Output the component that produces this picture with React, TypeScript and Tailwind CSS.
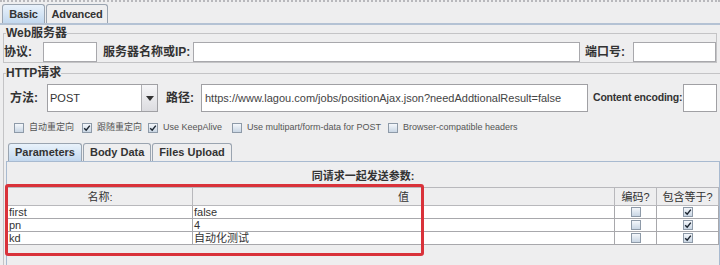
import { useState } from "react";

const FONT = "font-['Liberation_Sans','Noto_Sans_CJK_SC',sans-serif]";

function Check({ checked }: { checked?: boolean }) {
  return (
    <span className="flex h-[10px] w-[10px] shrink-0 items-center justify-center border border-[#8e9aa8] bg-gradient-to-b from-[#f4f7fb] to-[#c9d6e4]">
      {checked && (
        <svg viewBox="0 0 10 10" className="h-[8px] w-[8px]">
          <path d="M1.5 5.2 L4 7.8 L8.5 2" fill="none" stroke="#1c2530" strokeWidth="1.8" />
        </svg>
      )}
    </span>
  );
}

function Tab({ label, active, w }: { label: string; active?: boolean; w?: string }) {
  return (
    <div
      className={
        "flex h-full items-center justify-center whitespace-nowrap rounded-t-[3px] border border-b-0 border-[#9aa4b0] px-[6px] font-bold text-[#333] " +
        (w ?? "") +
        " " +
        (active ? "bg-gradient-to-b from-[#e9f2fb] to-[#c3d8ee]" : "bg-[#eeeeef]")
      }
    >
      {label}
    </div>
  );
}

const rows = [
  { name: "first", value: "false" },
  { name: "pn", value: "4" },
  { name: "kd", value: "自动化测试" },
];

const opts = [
  { label: "自动重定向", on: false, w: "w-[68px]" },
  { label: "跟随重定向", on: true, w: "w-[66px]" },
  { label: "Use KeepAlive", on: true, w: "w-[84px]" },
  { label: "Use multipart/form-data for POST", on: false, w: "w-[156px]" },
  { label: "Browser-compatible headers", on: false, w: "w-[150px]" },
];

export default function App() {
  const [tab, setTab] = useState("Parameters");

  return (
    <div className={"h-[265px] w-[720px] overflow-hidden border-t-2 border-dotted border-[#b8b8bc] bg-[#eeeeef] text-[11px] text-[#222] " + FONT}>
      <div className="flex h-[23px] items-end gap-px border-b-2 border-[#b4c2d4] pl-[2px] pt-[2px] text-[11px] tracking-[-0.2px]">
        <Tab label="Basic" active w="w-[43px]" />
        <Tab label="Advanced" w="w-[62px]" />
      </div>

      <fieldset className="mx-[3px] mt-[2px] border border-[#c4c4c6]">
        <legend className="ml-[2px] text-[12px] font-bold leading-[12px] text-[#333]">Web服务器</legend>
        <div className="mt-[3px] flex h-[20px] items-center text-[12px] font-bold text-[#333]">
          <span className="w-[39px]">协议:</span>
          <div className="h-[20px] w-[54px] border border-[#a8a8ac] bg-white" />
          <span className="ml-[6px] w-[90px] whitespace-nowrap">服务器名称或IP:</span>
          <div className="h-[20px] w-[387px] border border-[#a8a8ac] bg-white" />
          <span className="ml-[5px] w-[48px]">端口号:</span>
          <div className="h-[20px] w-[83px] border border-[#a8a8ac] bg-white" />
        </div>
      </fieldset>

      <fieldset className="mx-[3px] mr-0 mt-[4px] border border-b-0 border-r-0 border-[#c4c4c6]">
        <legend className="ml-[2px] text-[12px] font-bold leading-[12px] text-[#333]">HTTP请求</legend>
        <div className="mt-[5px] flex h-[28px] items-center text-[12px] font-bold text-[#333]">
          <span className="ml-[6px] w-[37px]">方法:</span>
          <div className="flex h-[28px] w-[111px] border border-[#a0a0a4] bg-white">
            <span className="flex flex-1 items-center pl-[2px] text-[11px] font-normal">POST</span>
            <span className="flex w-[16px] items-center justify-center border-l border-[#b0b0b4] bg-gradient-to-b from-[#f6f6f8] to-[#dcdce0]">
              <svg viewBox="0 0 8 5" className="h-[5px] w-[8px]">
                <path d="M0 0 H8 L4 5 Z" fill="#333" />
              </svg>
            </span>
          </div>
          <span className="ml-[8px] w-[35px]">路径:</span>
          <div className="flex h-[28px] w-[387px] items-center border border-[#a0a0a4] bg-white pl-[3px] text-[11px] font-normal text-[#444]">
            https://www.lagou.com/jobs/positionAjax.json?needAddtionalResult=false
          </div>
          <span className="ml-[5px] w-[90px] shrink-0 whitespace-nowrap text-[10.5px] tracking-[-0.2px]">Content encoding:</span>
          <div className="h-[28px] w-[34px] shrink-0 border border-[#a0a0a4] bg-white" />
        </div>

        <div className="mt-[11px] flex h-[10px] items-center pl-[10px] text-[9px] text-[#555]">
          {opts.map((o) => (
            <label key={o.label} className={"flex items-center gap-[5px] whitespace-nowrap " + o.w}>
              <Check checked={o.on} />
              <span>{o.label}</span>
            </label>
          ))}
        </div>

        <div className="ml-[2px] mt-[10px]">
          <div className="flex h-[18px] items-end gap-px pl-[2px] text-[11px]">
            {["Parameters", "Body Data", "Files Upload"].map((t) => (
              <button key={t} className="h-full" onClick={() => setTab(t)}>
                <Tab label={t} active={tab === t} />
              </button>
            ))}
          </div>
          <div className="h-[110px] border border-b-0 border-[#a8bad0]">
            <div className="pt-[8px] text-center text-[11px] font-bold leading-[12px] text-[#333]">同请求一起发送参数:</div>
            <div className="relative mt-[5px]">
              <table className="w-full table-fixed border-collapse text-[11px] leading-[12px] text-[#333]">
                <colgroup>
                  <col className="w-[185px]" />
                  <col className="w-[422px]" />
                  <col className="w-[42px]" />
                  <col />
                </colgroup>
                <thead>
                  <tr className="h-[18px] bg-[#eeeeef]">
                    <th className="border border-[#b8b8bc] p-0 font-normal">名称:</th>
                    <th className="border border-[#b8b8bc] p-0 font-normal">值</th>
                    <th className="border border-[#b8b8bc] p-0 font-normal">编码?</th>
                    <th className="border border-[#b8b8bc] p-0 font-normal">包含等于?</th>
                  </tr>
                </thead>
                <tbody>
                  {rows.map((r) => (
                    <tr key={r.name} className="h-[13px] bg-white">
                      <td className="border border-[#a8a8ac] p-0 pl-px">{r.name}</td>
                      <td className="border border-[#a8a8ac] p-0 pl-px">{r.value}</td>
                      <td className="border border-[#a8a8ac] p-0">
                        <div className="flex justify-center">
                          <Check />
                        </div>
                      </td>
                      <td className="border border-[#a8a8ac] p-0">
                        <div className="flex justify-center">
                          <Check checked />
                        </div>
                      </td>
                    </tr>
                  ))}
                </tbody>
              </table>
              <div className="absolute left-[-2px] top-[-3px] h-[72px] w-[419px] rounded-[3px] border-[3px] border-[#d9323a]" />
            </div>
          </div>
        </div>
      </fieldset>
    </div>
  );
}
